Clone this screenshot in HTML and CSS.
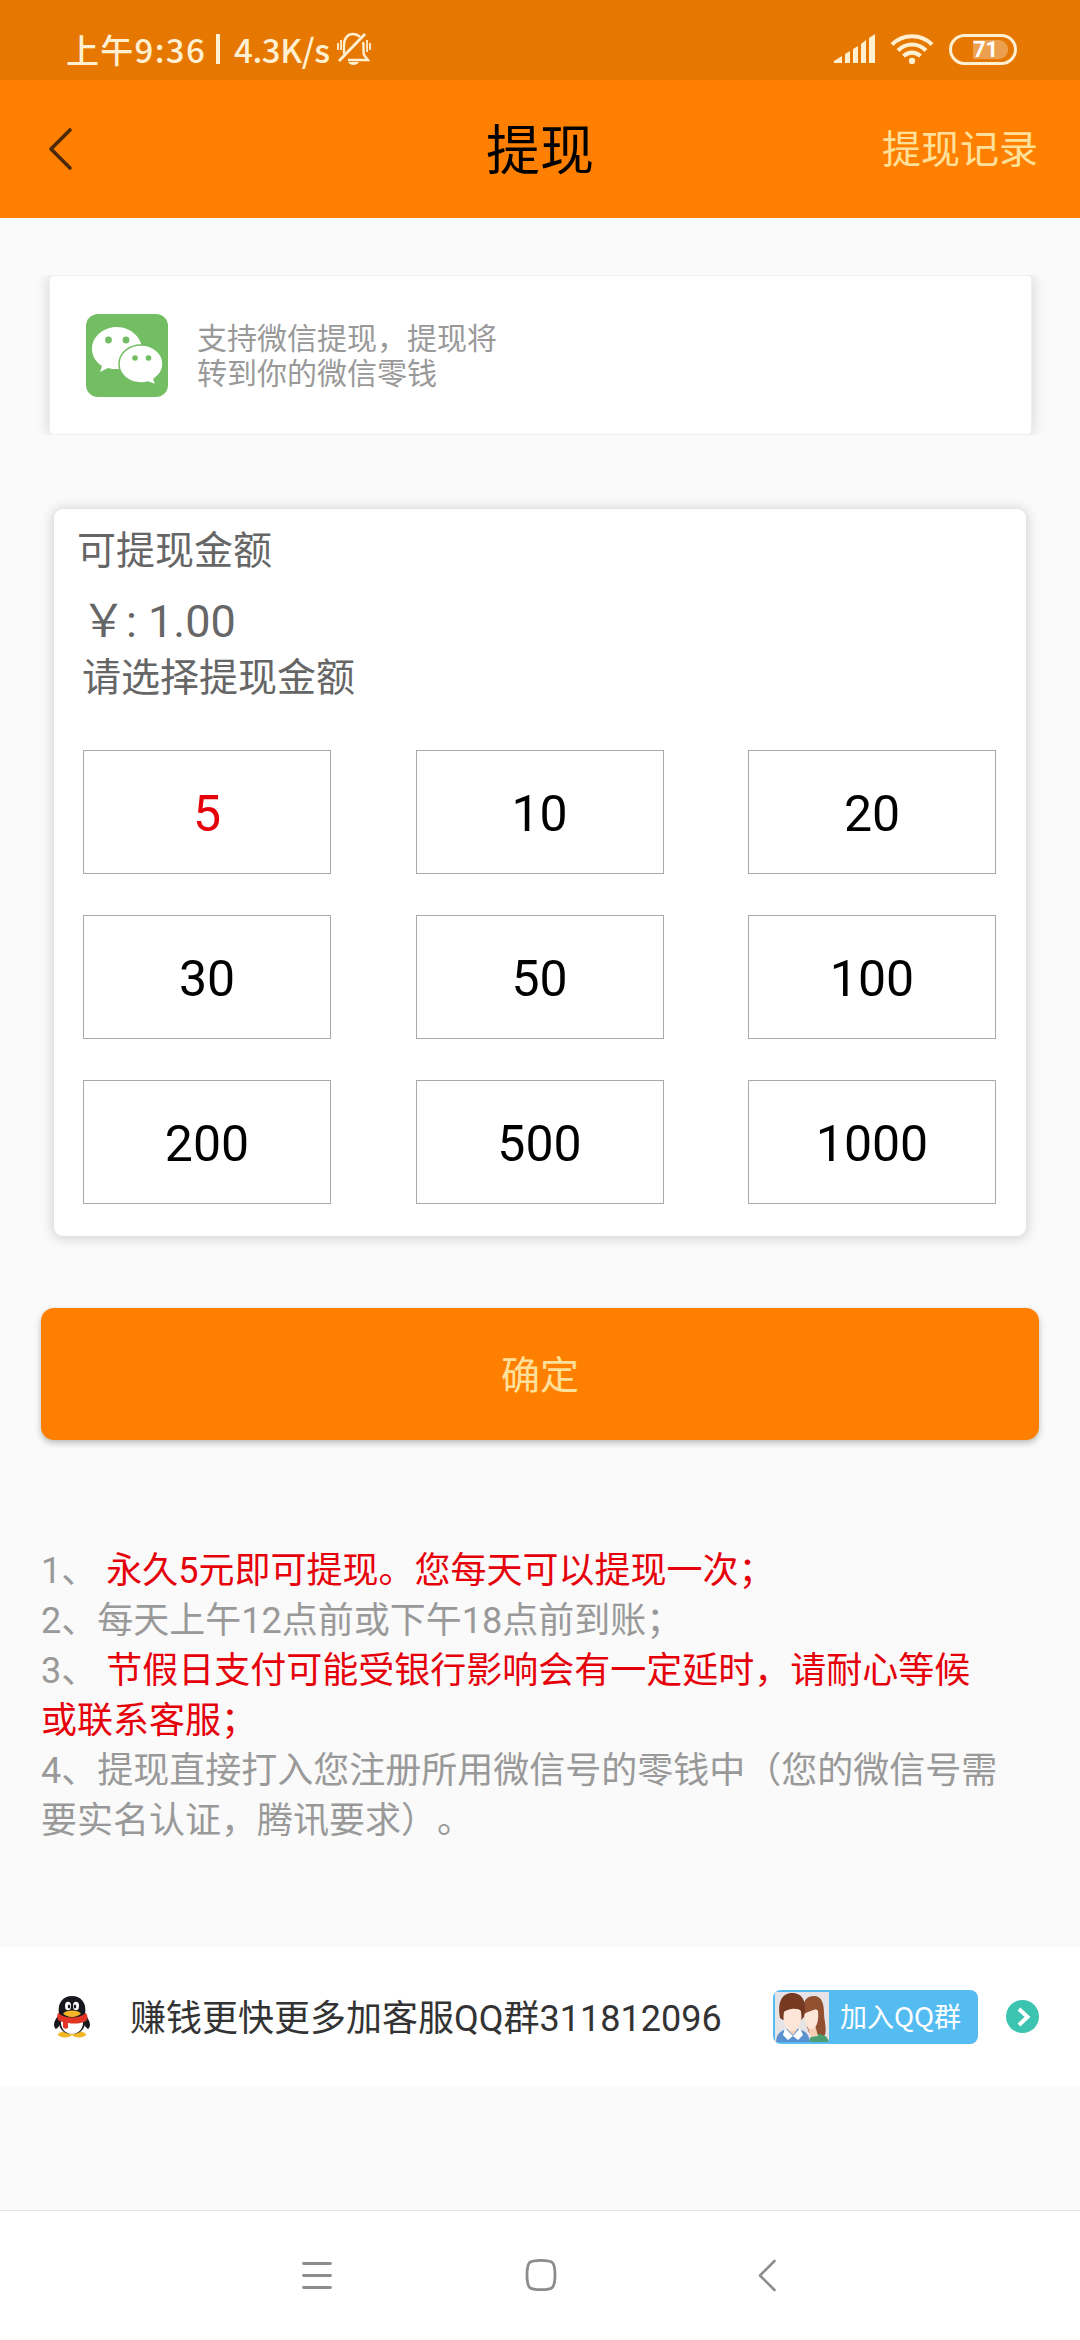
FILE: index.html
```html
<!DOCTYPE html>
<html lang="zh-CN">
<head>
    <meta charset="UTF-8">
    <meta name="viewport" content="width=device-width, initial-scale=1.0">
    <title>提现</title>
    <link rel="stylesheet" href="styles.css">
</head>
<body>
    <div class="status-bar">
        <div class="status-left">
            <span class="status-time">上午9:36</span>
            <span class="status-sep"></span>
            <span class="status-speed">4.3K/s</span>
            <svg class="icon-mute" width="36" height="36" viewBox="0 0 36 36" fill="none" stroke="#fff0d2" stroke-width="2.4">
                <path d="M8 23V14C8 7 12 3 17 3c3 0 5 1 7 3M27 11c1 3 0 9 1 13l4 5H12"/>
                <path d="M3 30L29 3" stroke-width="2.8"/>
                <path d="M2 12v7M5 9v10M31 9v12M34 12v7" stroke-width="1.8"/>
                <path d="M12 31h11c-2 4-9 4-11 0z" fill="#fff0d2" stroke="none"/>
            </svg>
        </div>
        <div class="status-right">
            <svg width="42" height="30" viewBox="0 0 42 30" fill="#fff0d2">
                <path d="M0 29v-2l8-5v7zM11 20l5-3v12h-5zM19 15l5-3v17h-5zM27 10l5-4v23h-5zM35 4l6-4v29h-6z"/>
            </svg>
            <svg class="icon-wifi" width="44" height="30" viewBox="0 0 44 30" fill="none" stroke="#fff0d2" stroke-width="4.2">
                <path d="M2 10.5C13-.5 31-.5 42 10.5M8 16.500c8-8 20-8 28 0M13.500 22c5-4.500 12-4.500 17 0"/>
                <circle cx="22" cy="27" r="3.200" fill="#fff0d2" stroke="none"/>
            </svg>
            <div class="battery"><span class="battery-level">71</span></div>
        </div>
    </div>

    <div class="header">
        <svg class="back" width="26" height="44" viewBox="0 0 26 44" fill="none" stroke="#4a2a08" stroke-width="3.6" stroke-linecap="round" stroke-linejoin="round">
            <path d="M22 3L3 22l19 19"/>
        </svg>
        <h1>提现</h1>
        <a class="record">提现记录</a>
    </div>

    <div class="wechat-card">
        <svg width="82" height="83" viewBox="0 0 82 83">
            <rect width="82" height="83" rx="12" fill="#73be63"/>
            <path d="M31 13C17 13 6 23 6 35c0 7 4 13 10 17l-2 6 8-4c3 1 6 1 9 1 14 0 25-9 25-20S45 13 31 13z" fill="#fff"/>
            <path d="M55 31c-12 0-22 8-22 19s10 19 22 19c3 0 5 0 7-1l8 3-2-6c6-4 9-9 9-15 0-11-10-19-22-19z" fill="#fff" stroke="#73be63" stroke-width="1.500"/>
            <g fill="#73be63">
                <circle cx="22.500" cy="26" r="3.400"/>
                <circle cx="40" cy="26" r="3.400"/>
                <circle cx="49" cy="44" r="2.800"/>
                <circle cx="62.500" cy="44" r="2.800"/>
            </g>
        </svg>
        <p>支持微信提现，提现将<br>转到你的微信零钱</p>
    </div>

    <div class="amount-card">
        <div class="label">可提现金额</div>
        <div class="balance">￥: 1.00</div>
        <div class="label choose">请选择提现金额</div>
        <div class="amounts">
            <div class="amount active">5</div>
            <div class="amount">10</div>
            <div class="amount">20</div>
            <div class="amount">30</div>
            <div class="amount">50</div>
            <div class="amount">100</div>
            <div class="amount">200</div>
            <div class="amount">500</div>
            <div class="amount">1000</div>
        </div>
    </div>

    <button class="submit">确定</button>

    <div class="rules">
        <p>1、 <span class="red">永久5元即可提现。您每天可以提现一次；</span></p>
        <p>2、每天上午12点前或下午18点前到账；</p>
        <p>3、 <span class="red">节假日支付可能受银行影响会有一定延时，请耐心等候<br>或联系客服；</span></p>
        <p>4、提现直接打入您注册所用微信号的零钱中（您的微信号需<br>要实名认证，腾讯要求）。</p>
    </div>

    <div class="qq-row">
        <svg class="penguin" width="36" height="44" viewBox="0 0 36 44">
            <ellipse cx="11" cy="39.500" rx="7" ry="3" fill="#f5b529"/>
            <ellipse cx="25" cy="39.500" rx="7" ry="3" fill="#f5b529"/>
            <path d="M5 20C-1 26-1 32 2 34c2-1 3-3 4-5M31 20c6 6 6 12 3 14-2-1-3-3-4-5" fill="#16181d"/>
            <path d="M5 21c-2 12 4 18 13 18s15-6 13-18z" fill="#16181d"/>
            <path d="M7 25c-1 9 5 14 11 14s12-5 11-14z" fill="#fff"/>
            <path d="M5 19C3 8 9 1 18 1s15 7 13 18c-4 5-22 5-26 0z" fill="#16181d"/>
            <path d="M4 18c8 6 20 6 28 0 2 3 2 6 0 8-6 3-12 3-18 2v5c-2 1-4 1-5-1v-5c-3-1-4-1-5-2-1-3-1-5 0-7z" fill="#e23425"/>
            <ellipse cx="14" cy="11" rx="3" ry="4.200" fill="#fff"/>
            <ellipse cx="22" cy="11" rx="3" ry="4.200" fill="#fff"/>
            <ellipse cx="15" cy="11.500" rx="1.200" ry="2" fill="#16181d"/>
            <ellipse cx="21" cy="11.500" rx="1.200" ry="2" fill="#16181d"/>
            <path d="M9 18.500c3-4 15-4 18 0-4 4.500-14 4.500-18 0z" fill="#f5b529"/>
        </svg>
        <span class="qq-text">赚钱更快更多加客服QQ群311812096</span>
        <div class="join">
            <svg width="54" height="50" viewBox="0 0 54 50">
                <rect width="54" height="50" fill="#e6e3e6"/>
                <path d="M29 22C26 8 33 4 39 4c8 0 10 8 10 17 0 8 3 14 1 22-5 4-14 3-17-5z" fill="#91502f"/>
                <path d="M34 50c0-5 5-8 9-8s10 2 11 8z" fill="#4c9f72"/>
                <path d="M32 33h8l3 11-7 1z" fill="#f7cdb4"/>
                <path d="M29 22c0-3 13-7 14-3 1 9-1 17-6 18-5 0-8-7-8-15z" fill="#fde6d7"/>
                <path d="M28 23c3-3 9-4 15-7l3 8c1-12-3-17-9-17-5 0-8 6-9 16z" fill="#91502f"/>
                <path d="M1 50c0-8 5-11 10-13h13c6 2 10 5 11 13z" fill="#5a92cf"/>
                <path d="M10 36l8 8 7-8 3 7-5 5-5-4-5 4-5-5z" fill="#fff"/>
                <path d="M13 31h9v7l-4 5-5-5z" fill="#f7cdb4"/>
                <path d="M5 26C2 10 7 1 17 1c11 0 15 9 12 24l-3 3H8z" fill="#763a23"/>
                <path d="M9 20c3-3 14-5 17-1 2 10-3 20-9 20S7 30 9 20z" fill="#fde6d7"/>
                <path d="M7 23c1-6 5-9 18-8l2 9 1-11L17 7 8 11z" fill="#763a23"/>
            </svg>
            <span>加入QQ群</span>
        </div>
        <svg class="go" width="33" height="33" viewBox="0 0 33 33">
            <circle cx="16.500" cy="16.500" r="16.500" fill="#3cc4b0"/>
            <path d="M13 9l8.500 8L13 25" fill="none" stroke="#fff" stroke-width="4"/>
        </svg>
    </div>

    <div class="nav-bar">
        <svg width="32" height="34" viewBox="0 0 32 34" stroke="#8c8c8c" stroke-width="2.800" stroke-linecap="round">
            <path d="M2.500 5.500h27M2.500 17.500h27M2.500 29.500h27"/>
        </svg>
        <svg class="nav-home" width="32" height="34" viewBox="0 0 32 34" fill="none" stroke="#8c8c8c" stroke-width="2.800">
            <path d="M16 2.400c11.500 0 14 1 14 14.600s-2.500 14.600-14 14.600S2 30.600 2 17 4.500 2.400 16 2.400z"/>
        </svg>
        <svg width="20" height="34" viewBox="0 0 20 34" fill="none" stroke="#8c8c8c" stroke-width="2.600" stroke-linecap="round" stroke-linejoin="round">
            <path d="M17.500 3L3 17.500l14.500 14.500"/>
        </svg>
    </div>
</body>
</html>
```
FILE: styles.css
```css
* {
    box-sizing: border-box;
}
body {
    margin: 0;
    height: 2340px;
    display: flex;
    flex-direction: column;
    background: #fafafa;
    font-family: Roboto, "Noto Sans CJK SC", sans-serif;
    color: #666;
    overflow: hidden;
    text-spacing-trim: space-all;
}
svg {
    display: block;
    flex: none;
}
p {
    margin: 0;
}
.status-bar {
    height: 80px;
    padding: 18px 63px 0 66px;
    display: flex;
    justify-content: space-between;
    background: #e67700;
    color: #fff0d2;
    font-family: "Noto Sans CJK SC", sans-serif;
    font-weight: 500;
}
.status-left,
.status-right {
    display: flex;
    align-items: center;
    height: 62px;
}
.status-left {
    font-size: 33px;
    line-height: 62px;
}
.status-time {
    width: 139px;
    letter-spacing: 1.3px;
    white-space: nowrap;
}
.status-sep {
    width: 4px;
    height: 30px;
    margin: 0 14px 0 11px;
    background: #fff0d2;
}
.status-speed {
    width: 101px;
    letter-spacing: -0.4px;
}
.icon-mute {
    margin-left: 1px;
}
.icon-wifi {
    margin: 0 15px 0 14px;
}
.battery {
    width: 68px;
    height: 31px;
    padding: 3px 6px 3px 21px;
    border: 3px solid #fff0d2;
    border-radius: 16px;
}
.battery-level {
    display: block;
    height: 19px;
    border-radius: 0 9px 9px 0;
    background: #ec9f4d;
    color: #fff;
    font: bold 22px/20px Roboto, sans-serif;
}
.header {
    height: 138px;
    padding: 0 42px 0 48px;
    display: grid;
    grid-template-columns: 1fr auto 1fr;
    align-items: center;
    background: #ff8000;
}
.header h1 {
    margin: 0 0 0 -6px;
    padding-top: 6px;
    font-size: 54px;
    line-height: 60px;
    font-weight: 400;
    color: #000;
}
.record {
    justify-self: end;
    padding-top: 2px;
    font-size: 39px;
    line-height: 44px;
    color: #ffe09a;
}
.wechat-card {
    margin: 58px 49px 0 50px;
    height: 158px;
    padding-left: 36px;
    display: flex;
    align-items: center;
    background: #fff;
    border-radius: 4px;
    box-shadow: 0 0 0 1px #efefef, 0 0 14px 2px rgba(0, 0, 0, 0.14);
    /* keep the shadow on the left and right sides only */
    clip-path: inset(-1px -20px);
}
.wechat-card p {
    margin-left: 29px;
    padding-top: 2px;
    font-size: 30px;
    line-height: 35px;
    color: #999;
}
.amount-card {
    margin: 75px 54px 0;
    height: 727px;
    padding: 19px 30px 0 29px;
    background: #fff;
    border-radius: 9px;
    box-shadow: 0 1px 12px 2px rgba(0, 0, 0, 0.15);
}
.label {
    margin-left: -6px;
    font-size: 39px;
    line-height: 46px;
}
.balance {
    margin: 20px 0 0 -2px;
    font-size: 45px;
    line-height: 56px;
}
.choose {
    margin: 5px 0 0 -1px;
}
.amounts {
    margin-top: 49px;
    display: grid;
    grid-template-columns: repeat(3, 248px);
    justify-content: space-between;
    row-gap: 41px;
}
.amount {
    height: 124px;
    border: 1px solid #a9a9a9;
    font-size: 50px;
    line-height: 126px;
    text-align: center;
    color: #000;
}
.active {
    color: #e6000a;
}
.submit {
    margin: 72px 41px 0;
    padding: 0 0 4px;
    height: 132px;
    flex: none;
    border: none;
    border-radius: 13px;
    background: #ff8000;
    box-shadow: 0 3px 6px rgba(0, 0, 0, 0.25);
    font-family: inherit;
    font-size: 39px;
    color: #ffe09a;
}
.rules {
    margin: 106px 41px 0;
    font-size: 36px;
    line-height: 50px;
    color: #999;
}
.red {
    color: #e6000a;
}
.qq-row {
    margin-top: 101px;
    height: 139px;
    padding: 0 41px 0 54px;
    display: flex;
    align-items: center;
    background: #fff;
}
.qq-text {
    margin-left: 40px;
    padding-bottom: 3px;
    font-size: 36px;
    color: #333;
}
.join {
    margin-left: auto;
    width: 205px;
    height: 54px;
    padding-left: 2px;
    display: flex;
    align-items: center;
    border-radius: 8px;
    overflow: hidden;
    background: #55bcf2;
    font-family: "Noto Sans CJK SC", sans-serif;
    font-size: 27px;
    color: #fff;
}
.join span {
    margin-left: 11px;
    padding-bottom: 2px;
}
.go {
    margin-left: 28px;
}
.nav-bar {
    margin-top: auto;
    height: 130px;
    padding: 0 303px 2px 301px;
    display: flex;
    align-items: center;
    justify-content: space-between;
    background: #fff;
    border-top: 1px solid #e4e4e4;
}
.nav-home {
    margin-right: 8px;
}
```
